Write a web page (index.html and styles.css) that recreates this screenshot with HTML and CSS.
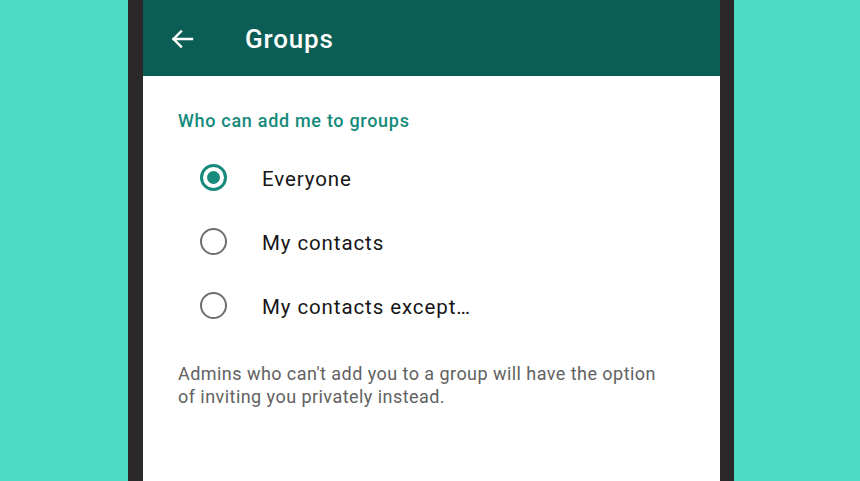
FILE: index.html
```html
<!DOCTYPE html>
<html lang="en">
<head>
    <meta charset="UTF-8">
    <meta name="viewport" content="width=device-width, initial-scale=1.0">
    <title>Groups</title>
    <link rel="stylesheet" href="styles.css">
</head>
<body>
    <div class="phone">
        <div class="screen">
            <header class="topbar">
                <span class="back">
                    <svg width="24" height="24" viewBox="0 0 24 24">
                        <path d="M22 12H3.5M11 4.5L3.5 12 11 19.5" fill="none" stroke="#fff" stroke-width="2.4" stroke-linecap="square"/>
                    </svg>
                </span>
                <h1>Groups</h1>
            </header>

            <div class="content">
                <h2>Who can add me to groups</h2>

                <ul class="options">
                    <li class="option">
                        <span class="radio checked"></span>
                        <span class="label">Everyone</span>
                    </li>
                    <li class="option">
                        <span class="radio"></span>
                        <span class="label">My contacts</span>
                    </li>
                    <li class="option">
                        <span class="radio"></span>
                        <span class="label">My contacts except…</span>
                    </li>
                </ul>

                <p class="note">
                    Admins who can't add you to a group will have the option of inviting you privately instead.
                </p>
            </div>
        </div>
    </div>
</body>
</html>
```

FILE: styles.css
```css
* {
    margin: 0;
    padding: 0;
    box-sizing: border-box;
}

body {
    font-family: Roboto, 'Noto Sans', sans-serif;
    background: #4ddbc7;
    height: 100vh;
    overflow: hidden;
}

.phone {
    margin-left: 128px;
    width: 606px;
    height: 100vh;
    border-left: 15px solid #2a2829;
    border-right: 14px solid #2a2829;
}

.screen {
    background: white;
    height: 100%;
}

.topbar {
    background: #0b5e55;
    height: 76px;
    display: flex;
    align-items: center;
    padding-left: 27px;
    padding-top: 1px;
}

.back {
    display: flex;
    width: 24px;
    height: 24px;
}

.topbar h1 {
    color: white;
    font-size: 26px;
    font-weight: 500;
    margin-left: 51px;
    letter-spacing: 0.8px;
}

.content {
    padding: 34px 35px 0;
}

.content h2 {
    color: #148a7b;
    font-size: 18px;
    font-weight: 500;
    line-height: 22px;
    letter-spacing: 0.7px;
}

.options {
    list-style: none;
    margin-top: 13px;
}

.option {
    height: 64px;
    display: flex;
    align-items: center;
    padding-left: 22px;
}

.radio {
    width: 27px;
    height: 27px;
    border: 2.5px solid #6e6e6e;
    border-radius: 50%;
    display: flex;
    align-items: center;
    justify-content: center;
}

.radio.checked {
    border: 3px solid #168a7b;
}

.radio.checked::after {
    content: "";
    width: 13px;
    height: 13px;
    border-radius: 50%;
    background: #168a7b;
}

.label {
    margin-left: 35px;
    padding-top: 3px;
    font-size: 20.5px;
    letter-spacing: 0.9px;
    color: #161616;
}

.note {
    margin-top: 25px;
    color: #626262;
    font-size: 18px;
    line-height: 23px;
    letter-spacing: 0.45px;
    max-width: 500px;
}
```
